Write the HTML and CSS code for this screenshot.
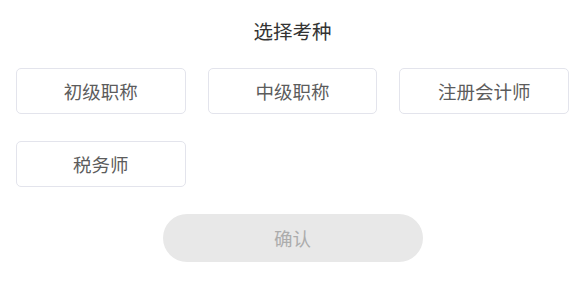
FILE: index.html
```html
<!DOCTYPE html>
<html lang="zh-CN">
<head>
    <meta charset="UTF-8">
    <meta name="viewport" content="width=device-width, initial-scale=1.0">
    <title>选择考种</title>
    <link rel="stylesheet" href="styles.css">
</head>
<body>
    <div class="page">
        <div class="title">选择考种</div>

        <div class="options">
            <div class="option">初级职称</div>
            <div class="option">中级职称</div>
            <div class="option">注册会计师</div>
            <div class="option">税务师</div>
        </div>

        <button class="confirm" disabled>确认</button>
    </div>
</body>
</html>
```

FILE: styles.css
```css
body {
    font-family: "Noto Sans CJK SC", "Noto Sans", sans-serif;
    margin: 0;
    padding: 0;
    background-color: #ffffff;
}

.page {
    padding: 0 16px;
}

.title {
    padding-top: 18px;
    line-height: 26px;
    font-size: 19.5px;
    color: #333333;
    text-align: center;
}

.options {
    display: grid;
    grid-template-columns: repeat(3, 1fr);
    column-gap: 22px;
    row-gap: 27px;
    margin-top: 24px;
}

.option {
    height: 46px;
    box-sizing: border-box;
    border: 1px solid #e3e4ec;
    border-radius: 5px;
    display: flex;
    align-items: center;
    justify-content: center;
    font-size: 18.5px;
    color: #5c5c5c;
}

.confirm {
    display: block;
    width: 260px;
    height: 48px;
    margin: 27px auto 0;
    border: none;
    border-radius: 24px;
    background-color: #e8e8e8;
    color: #acacac;
    font-family: inherit;
    font-size: 18.5px;
}
```
